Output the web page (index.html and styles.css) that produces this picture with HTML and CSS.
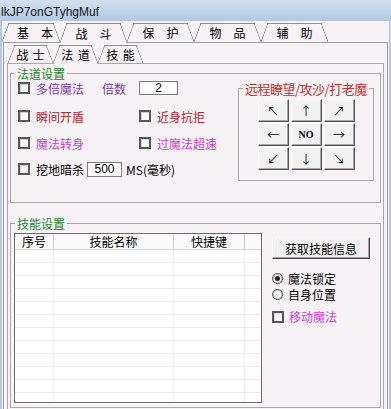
FILE: index.html
```html
<!DOCTYPE html>
<html>
	<head>
	<meta charset="utf-8"/>
		<link rel="stylesheet" href="styles.css">
	</head>
	<body>
		<div class="window">
			<div class="titlebar">lkJP7onGTyhgMuf</div>
			<div class="frame">
				<div class="tabs main-tabs">
					<span class="tab first">基　本</span>
					<span class="tab on">战　斗</span>
					<span class="tab">保　护</span>
					<span class="tab">物　品</span>
					<span class="tab">辅　助</span>
				</div>
				<div class="panel">
					<div class="tabs sub-tabs">
						<span class="tab">战 士</span>
						<span class="tab on">法 道</span>
						<span class="tab">技 能</span>
					</div>
					<div class="subpanel">

						<fieldset class="group magic">
							<legend>法道设置</legend>
							<div class="magic-body">
								<div class="opts">
									<div class="row r1">
										<div class="cell">
											<span class="cb"></span><span class="purple">多倍魔法</span>
											<span class="purple times">倍数</span>
										</div>
										<input class="field f1" type="text" value="2">
									</div>
									<div class="row r2">
										<div class="cell"><span class="cb"></span><span class="red">瞬间开盾</span></div>
										<div class="cell"><span class="cb"></span><span class="red">近身抗拒</span></div>
									</div>
									<div class="row r3">
										<div class="cell"><span class="cb"></span><span class="pink">魔法转身</span></div>
										<div class="cell"><span class="cb"></span><span class="pink">过魔法超速</span></div>
									</div>
									<div class="row r4">
										<span class="cb"></span><span>挖地暗杀</span>
										<input class="field f2" type="text" value="500">
										<span class="ms">MS(毫秒)</span>
									</div>
								</div>
								<fieldset class="group remote">
									<legend>远程瞭望/攻沙/打老魔</legend>
									<div class="pad">
										<span class="key">↖</span>
										<span class="key">↑</span>
										<span class="key">↗</span>
										<span class="key">←</span>
										<span class="key no">NO</span>
										<span class="key">→</span>
										<span class="key">↙</span>
										<span class="key">↓</span>
										<span class="key">↘</span>
									</div>
								</fieldset>
							</div>
						</fieldset>

						<fieldset class="group skills">
							<legend>技能设置</legend>
							<div class="skills-body">
								<div class="listview">
									<table class="list">
										<colgroup>
											<col class="c1"><col class="c2"><col class="c3"><col class="c4">
										</colgroup>
										<thead>
											<tr><th>序号</th><th>技能名称</th><th>快捷键</th><th></th></tr>
										</thead>
										<tbody>
											<tr><td></td><td></td><td></td><td></td></tr>
											<tr><td></td><td></td><td></td><td></td></tr>
											<tr><td></td><td></td><td></td><td></td></tr>
											<tr><td></td><td></td><td></td><td></td></tr>
											<tr><td></td><td></td><td></td><td></td></tr>
											<tr><td></td><td></td><td></td><td></td></tr>
											<tr><td></td><td></td><td></td><td></td></tr>
											<tr><td></td><td></td><td></td><td></td></tr>
											<tr><td></td><td></td><td></td><td></td></tr>
											<tr><td></td><td></td><td></td><td></td></tr>
											<tr><td></td><td></td><td></td><td></td></tr>
											<tr><td></td><td></td><td></td><td></td></tr>
										</tbody>
									</table>
								</div>
								<div class="side">
									<button class="btn">获取技能信息</button>
									<div class="opt-row o1"><span class="rb on"></span><span>魔法锁定</span></div>
									<div class="opt-row o2"><span class="rb"></span><span>自身位置</span></div>
									<div class="opt-row o3"><span class="cb"></span><span class="pink">移动魔法</span></div>
								</div>
							</div>
						</fieldset>

					</div>
				</div>
			</div>
		</div>
	</body>
</html>
```

FILE: styles.css
```css
*{
	box-sizing: border-box;
}
body{
	margin: 0;
	background: #f6f2f6;
	font-family: "Noto Sans CJK SC", sans-serif;
	font-size: 12px;
	color: #000;
}
.window{
	width: 391px;
	height: 409px;
	overflow: hidden;
}
.titlebar{
	height: 21px;
	padding: 5px 0 0 1px;
	line-height: 15px;
	font-family: "Liberation Sans", Arial, sans-serif;
	font-size: 12px;
	color: #151515;
	background: linear-gradient(#d4e0f0, #b3c8e5);
}
.frame{
	height: 388px;
	padding-top: 2px;
	border-left: 2px solid #b8cae3;
	border-right: 2px solid #b8cae3;
	overflow: hidden;
}

/* slanted tabs: top line + two diagonal edges */
.tabs{
	display: flex;
}
.tab{
	--ln: #8f8f8f;
	display: flex;
	align-items: center;
	justify-content: center;
	flex: none;
	white-space: nowrap;
	background:
		linear-gradient(var(--ln), var(--ln)) 6px 0 / calc(100% - 12px) 1px no-repeat,
		linear-gradient(to top left, transparent calc(50% - 0.7px), var(--ln) 50%, transparent calc(50% + 0.7px)) 0 0 / 7px 100% no-repeat,
		linear-gradient(to top right, transparent calc(50% - 0.7px), var(--ln) 50%, transparent calc(50% + 0.7px)) 100% 0 / 7px 100% no-repeat;
}
.tab.on{
	position: relative;
	z-index: 1;
	margin-bottom: -1px;
	background-color: #f6f2f6;
}
.main-tabs .tab{
	width: 67px;
	height: 19px;
}
.main-tabs .tab.on{
	height: 20px;
}
.main-tabs .first{
	width: 58px;
	padding-left: 8px;
}
.sub-tabs{
	margin-left: 1px;
	word-spacing: 2px;
}
.sub-tabs .tab{
	width: 45px;
	height: 18px;
}
.sub-tabs .tab.on{
	height: 19px;
}

.panel{
	margin: 0 1px;
	height: 420px;
	padding: 2px 3px 0;
	border: 1px solid #9d9d9d;
}
.subpanel{
	height: 420px;
	padding: 3px 2px 0;
	border: 1px solid #a9a9a9;
}

.group{
	margin: 0;
	padding: 0;
	min-inline-size: 0;
	border: 1px solid #aaaaaa;
}
.group legend{
	margin-left: 4px;
	padding: 0 2px;
	line-height: 13px;
	white-space: nowrap;
	color: #23862a;
}
.magic{
	height: 136px;
}
.magic-body{
	display: flex;
}
.opts{
	flex: 1;
	min-width: 0;
	padding-left: 7px;
}
.row{
	display: flex;
	align-items: center;
	height: 14px;
	white-space: nowrap;
}
.r1{ margin-top: 1px; }
.r2{ margin-top: 14px; }
.r3{ margin-top: 13px; }
.r4{ margin-top: 12px; }
.cell{
	display: flex;
	align-items: center;
	gap: 6px;
	flex: none;
	width: 121px;
}
.cell + .cell{
	width: auto;
}
.times{
	margin-left: 12px;
}
.row.r4{
	gap: 6px;
}
.r4 .field{
	margin-left: -3px;
}
.ms{
	margin-left: -2px;
}

.purple{ color: #7c3ba4; }
.red{ color: #ae2a2c; }
.pink{ color: #d23bd2; }

.cb{
	flex: none;
	width: 12px;
	height: 12px;
	border: 2px solid #585858;
	background: #f8f8f8;
	box-shadow: inset 1px 1px #d4d4d4;
}
.field{
	flex: none;
	height: 14px;
	padding: 0;
	border: 1px solid #7d7d7d;
	background: #fff;
	font-family: "Liberation Sans", Arial, sans-serif;
	font-size: 12px;
	text-align: center;
	color: #000;
}
.f1{
	width: 39px;
}
.f2{
	width: 35px;
	height: 15px;
}

.remote{
	flex: none;
	width: 136px;
	margin: 2px 6px 0 0;
}
.remote legend{
	font-size: 13px;
	letter-spacing: -0.5px;
	color: #c4302c;
}
.pad{
	display: grid;
	grid-template-columns: repeat(3, 31px);
	grid-auto-rows: 23px;
	column-gap: 2px;
	row-gap: 1px;
	justify-content: center;
	padding: 4px 0 10px;
}
.key{
	display: flex;
	align-items: center;
	justify-content: center;
	background: #f2f2f2;
	border: 1px solid;
	border-color: #fff #555 #555 #fff;
	box-shadow: inset -1px -1px #a6a6a6;
	font-family: "Noto Sans CJK SC", sans-serif;
	font-size: 12px;
	line-height: 1;
}
.key.no{
	font-family: "Liberation Serif", serif;
	font-weight: bold;
	font-size: 10px;
}

.skills{
	height: 191px;
	margin-top: 14px;
}
.skills-body{
	display: flex;
	padding: 3px 0 0 3px;
}
.listview{
	flex: none;
	width: 248px;
	height: 170px;
	border: 1px solid #6b6b6b;
	background: #fff;
	overflow: hidden;
}
.list{
	width: 246px;
	table-layout: fixed;
	border-collapse: separate;
	border-spacing: 0;
}
.c1{ width: 39px; }
.c2{ width: 120px; }
.c3{ width: 71px; }
.c4{ width: 16px; }
.list th{
	height: 16px;
	padding: 0;
	font-weight: normal;
	line-height: 15px;
	background: #fafafa;
	border-bottom: 1px solid #d6d6d6;
	border-right: 1px solid #cdcdcd;
	text-align: center;
}
.list td{
	height: 13px;
	padding: 0;
	border-bottom: 1px solid #ececec;
	border-right: 1px solid #efefef;
}
.list th:last-child,
.list td:last-child{
	border-right: none;
}

.side{
	display: flex;
	flex-direction: column;
	margin-left: 10px;
}
.btn{
	width: 98px;
	height: 22px;
	margin-top: 4px;
	padding: 0;
	background: #f0f0f0;
	border: 1px solid;
	border-color: #fff #454545 #454545 #fff;
	box-shadow: inset -1px -1px #a3a3a3;
	font-family: "Noto Sans CJK SC", sans-serif;
	font-size: 12px;
	color: #000;
}
.opt-row{
	display: flex;
	align-items: center;
	gap: 5px;
	height: 13px;
}
.o1{ margin-top: 13px; }
.o2{ margin-top: 3px; }
.o3{ margin-top: 9px; }
.rb{
	flex: none;
	display: flex;
	align-items: center;
	justify-content: center;
	width: 11px;
	height: 11px;
	border-radius: 50%;
	border: 1px solid #4e4e4e;
	background: #fff;
	box-shadow: inset 0 0 0 1px #c4c4c4;
}
.rb.on::after{
	content: "";
	width: 5px;
	height: 5px;
	border-radius: 50%;
	background: #1e1e1e;
}
```
